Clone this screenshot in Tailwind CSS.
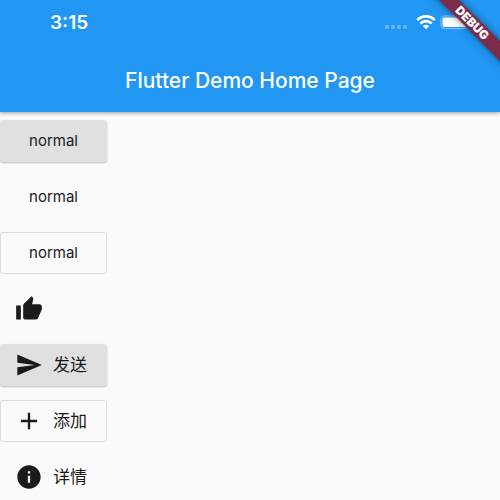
<!DOCTYPE html>
<html lang="zh">
<head>
<meta charset="utf-8">
<title>Flutter Demo Home Page</title>
<script src="https://cdn.jsdelivr.net/npm/@tailwindcss/browser@4"></script>
</head>
<body class="relative min-h-screen overflow-hidden bg-[#fafafa] font-['Inter','Noto_Sans_CJK_SC',sans-serif] text-[#1b1b1b]">
<header class="bg-[#2196f3] text-white shadow-[0_1px_4px_rgba(0,0,0,0.4)]">
  <div class="flex h-[46px] items-center justify-between pr-7 pl-[50px]">
    <time class="text-[19px] leading-6 font-semibold">3:15</time>
    <div class="flex items-center gap-2">
      <svg class="h-4 w-6" viewBox="0 0 24 16" fill="#fff" fill-opacity=".3" aria-hidden="true"><rect x="1" y="10" width="4" height="4" rx="1.3"/><rect x="7" y="10" width="4" height="4" rx="1.3"/><rect x="13" y="10" width="4" height="4" rx="1.3"/><rect x="19" y="10" width="4" height="4" rx="1.3"/></svg>
      <svg class="h-4 w-5" viewBox="0 0 20 16" fill="none" stroke="#fff" stroke-width="2.7" aria-hidden="true"><path d="M1.2 5.2C6 0 14 0 18.8 5.2M4.4 8.5C7.7 5.2 12.3 5.2 15.6 8.5"/><path d="M10 14.2 6.9 11C8.6 9.3 11.4 9.3 13.1 11z" fill="#fff" stroke="none"/></svg>
      <svg class="-ml-1 h-4 w-8" viewBox="0 0 32 16" aria-hidden="true"><rect x=".9" y="1" width="27.500" height="12.600" rx="3.600" fill="none" stroke="#fff" stroke-opacity=".45"/><rect x="2.500" y="2.500" width="24.300" height="9.600" rx="2.200" fill="#fff"/><path d="M29.800 5.500v4c2-.7 2-3.300 0-4z" fill="#fff" fill-opacity=".5"/></svg>
    </div>
  </div>
  <h1 class="flex h-[66px] items-center justify-center pt-1 text-[21px] leading-8 font-medium">Flutter Demo Home Page</h1>
</header>
<div class="pointer-events-none absolute top-0 right-0 size-24 overflow-hidden">
  <div class="absolute top-4 -right-10 flex h-3.5 w-34 rotate-45 items-center justify-center bg-[#7b2c48] text-xs leading-3.5 font-black text-white shadow-[0_0_7px_rgba(0,0,0,0.5)]">DEBUG</div>
</div>
<main class="flex flex-col items-start gap-3.5 pt-2 text-[15px] leading-6">
  <button class="h-[42px] w-[107px] rounded-[3px] bg-[#e0e0e0] shadow-[0_1px_2px_rgba(0,0,0,0.25)]">normal</button>
  <button class="h-[42px] w-[107px]">normal</button>
  <button class="h-[42px] w-[107px] rounded-[3px] border border-[#dcdcdc]">normal</button>
  <button class="flex h-[42px] items-center pl-[15px]" aria-label="Like"><svg class="size-7" viewBox="0 0 24 24" fill="currentColor"><path d="M1 21h4V9H1v12zm22-11c0-1.100-.9-2-2-2h-6.310l.95-4.570.03-.32c0-.41-.17-.79-.44-1.060L14.170 1 7.590 7.590C7.220 7.950 7 8.450 7 9v10c0 1.100.9 2 2 2h9c.83 0 1.540-.5 1.840-1.220l3.020-7.050c.09-.23.14-.47.14-.73v-2z"/></svg></button>
  <button class="flex h-[42px] w-[107px] items-center gap-2.5 rounded-[3px] bg-[#e0e0e0] pl-[15px] text-[17px] shadow-[0_1px_2px_rgba(0,0,0,0.25)]"><svg class="size-7" viewBox="0 0 24 24" fill="currentColor" aria-hidden="true"><path d="M2.010 21 23 12 2.010 3 2 10l15 2-15 2z"/></svg>发送</button>
  <button class="flex h-[42px] w-[107px] items-center gap-2.5 rounded-[3px] border border-[#dcdcdc] pl-3.5 text-[17px]"><svg class="size-7" viewBox="0 0 24 24" fill="currentColor" aria-hidden="true"><path d="M19 13h-6v6h-2v-6H5v-2h6V5h2v6h6v2z"/></svg>添加</button>
  <button class="flex h-[42px] w-[107px] items-center gap-2.5 pl-[15px] text-[17px]"><svg class="size-7" viewBox="0 0 24 24" fill="currentColor" aria-hidden="true"><path d="M12 2C6.480 2 2 6.480 2 12s4.480 10 10 10 10-4.480 10-10S17.520 2 12 2zm1 15h-2v-6h2v6zm0-8h-2V7h2v2z"/></svg>详情</button>
</main>
</body>
</html>
